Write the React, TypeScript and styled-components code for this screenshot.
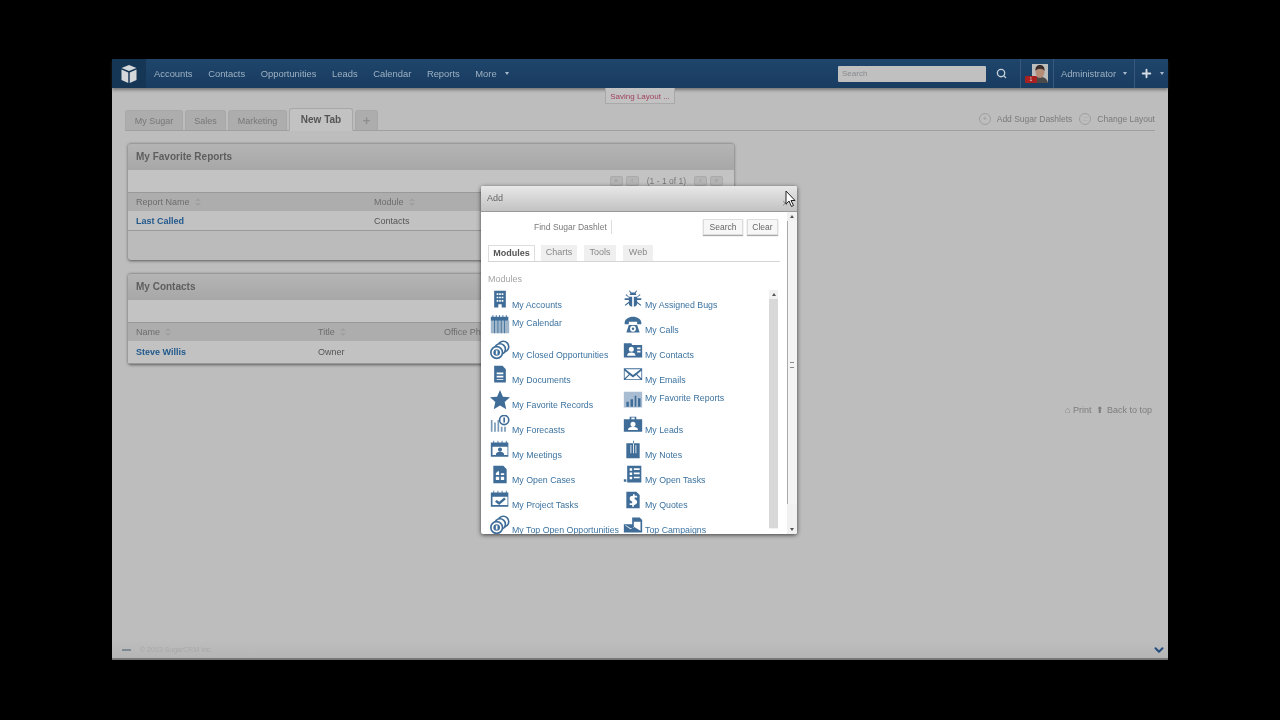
import React from "react";
import styled, { createGlobalStyle } from "styled-components";
import { Search, Plus, ChevronDown } from "lucide-react";

const GlobalStyle = createGlobalStyle`
  html, body {
    margin: 0;
    height: 100%;
    background: #000;
    font-family: "Liberation Sans", Arial, sans-serif;
  }
  #root { height: 100%; }
`;

const Screen = styled.div`
  width: 1280px;
  height: 720px;
  padding: 59px 112px 60px;
  box-sizing: border-box;
  overflow: hidden;
  background: #000;
`;

const Page = styled.div`
  position: relative;
  height: 601px;
  display: flex;
  flex-direction: column;
  background: #bdbdbd;
  filter: blur(0.5px);
`;

const Nav = styled.div`
  height: 29px;
  flex: none;
  display: flex;
  align-items: center;
  color: #9db1c3;
  font-size: 9.4px;
  background: linear-gradient(#1f456b, #193c61);
  box-shadow: 0 2px 3px rgba(60, 60, 60, 0.55);
`;

const Logo = styled.div`
  width: 34px;
  height: 29px;
  display: flex;
  align-items: center;
  justify-content: center;
  background: #163656;
`;

const NavLinks = styled.div`
  display: flex;
  gap: 15.6px;
  margin-left: 8px;
`;

const NavLink = styled.span`
  display: flex;
  align-items: center;
  gap: 8px;
`;

const Caret = styled.i`
  width: 0;
  height: 0;
  border-left: 2.5px solid transparent;
  border-right: 2.5px solid transparent;
  border-top: 3px solid #a9bccd;
`;

const NavRight = styled.div`
  margin-left: auto;
  height: 100%;
  display: flex;
  align-items: center;
`;

const SearchBox = styled.div`
  width: 148px;
  height: 16px;
  padding-left: 4px;
  box-sizing: border-box;
  font-size: 8px;
  line-height: 16px;
  color: #85898c;
  background: #c0c0c0;
  border-radius: 1px;
`;

const SearchButton = styled.div`
  width: 34px;
  padding-right: 4px;
  box-sizing: border-box;
  display: flex;
  justify-content: center;
  color: #c5cfd8;
`;

const NavCell = styled.div`
  height: 100%;
  display: flex;
  align-items: center;
  border-left: 1px solid #38597b;
  box-sizing: border-box;
  width: ${(p: { $w: number }) => p.$w}px;
  justify-content: center;
  gap: 7px;
  position: relative;
`;

const Avatar = styled.svg`
  margin-left: 6px;
`;

const Badge = styled.span`
  position: absolute;
  left: 4px;
  bottom: 5px;
  width: 12px;
  height: 7px;
  background: #a82020;
  color: #ddd;
  font-size: 5px;
  line-height: 7px;
  text-align: center;
  border-radius: 1px;
`;

const Saving = styled.div`
  position: absolute;
  left: 493px;
  top: 29px;
  width: 70px;
  height: 16px;
  background: #c2c2c2;
  border: 1px solid #a9a9a9;
  border-top: none;
  box-sizing: border-box;
  text-align: center;
  font-size: 8px;
  line-height: 17px;
  color: #a0405c;
`;

const TabStrip = styled.div`
  margin: 19px 13px 0 13px;
  height: 23px;
  flex: none;
  display: flex;
  align-items: flex-end;
  gap: 2px;
  border-bottom: 1px solid #a0a0a0;
  position: relative;
`;

const Tab = styled.div<{ $active?: boolean; $w: number; $glyph?: boolean }>`
  width: ${(p) => p.$w}px;
  height: ${(p) => (p.$active ? 23 : 20)}px;
  box-sizing: border-box;
  text-align: center;
  line-height: ${(p) => (p.$active ? 21 : 20)}px;
  font-size: ${(p) => (p.$glyph ? 13 : p.$active ? 10 : 9)}px;
  font-weight: ${(p) => (p.$active || p.$glyph ? 700 : 400)};
  color: ${(p) => (p.$active ? "#555" : p.$glyph ? "#8e8e8e" : "#777")};
  background: ${(p) => (p.$active ? "#c2c2c2" : "#adadad")};
  border: 1px solid #a8a8a8;
  border-bottom: ${(p) => (p.$active ? "1px solid #c2c2c2" : "none")};
  margin-bottom: ${(p) => (p.$active ? -1 : 0)}px;
  border-radius: 3px 3px 0 0;
`;

const TabActions = styled.div`
  margin-left: auto;
  align-self: center;
  display: flex;
  align-items: center;
  font-size: 8.5px;
  color: #7a7a7a;
  gap: 6px;
`;

const Ring = styled.span`
  width: 12px;
  height: 12px;
  box-sizing: border-box;
  margin-left: 1px;
  border: 1px solid #9f9f9f;
  border-radius: 50%;
  font-size: 8px;
  line-height: 10px;
  text-align: center;
  color: #999;
`;

const Main = styled.div`
  flex: 1;
  display: flex;
  padding: 12px 13px 0 16px;
  min-height: 0;
`;

const Column = styled.div`
  width: 606px;
  display: flex;
  flex-direction: column;
  gap: 13px;
`;

const Panel = styled.div`
  background: #bbb;
  border-radius: 3px;
  box-shadow: 0 1px 3px rgba(50, 50, 50, 0.7);
  padding-bottom: ${(p: { $pad: number }) => p.$pad}px;
`;

const PanelHead = styled.div`
  height: 26px;
  padding-left: 8px;
  font-size: 10px;
  font-weight: 700;
  line-height: 26px;
  color: #5e5e5e;
  background: linear-gradient(#b4b4b4, #a7a7a7);
  border-top: 1px solid #9a9a9a;
  border-radius: 3px 3px 0 0;
`;

const Pager = styled.div`
  height: 22px;
  background: #c3c3c3;
  display: flex;
  align-items: center;
  justify-content: flex-end;
  gap: 3px;
  padding-right: 11px;
  font-size: 8.5px;
  color: #777;
`;

const PagerButton = styled.span`
  width: 13px;
  height: 10px;
  box-sizing: border-box;
  background: #b5b5b5;
  border: 1px solid #aaa;
  border-radius: 2px;
  font-size: 7px;
  line-height: 8px;
  text-align: center;
  color: #999;
`;

const PagerText = styled.span`
  margin: 0 5px;
`;

const Row = styled.div<{ $cols: string; $head?: boolean; $h?: number }>`
  display: grid;
  grid-template-columns: ${(p) => p.$cols};
  align-items: center;
  height: ${(p) => p.$h ?? (p.$head ? 19 : 20)}px;
  padding-left: 8px;
  font-size: 9px;
  color: ${(p) => (p.$head ? "#6c6c6c" : "#555")};
  background: ${(p) => (p.$head ? "#adadad" : "#c2c2c2")};
  border-top: ${(p) => (p.$head ? "1px solid #999" : "none")};
  border-bottom: ${(p) => (p.$head ? "none" : "1px solid #999")};
  box-sizing: border-box;
  white-space: nowrap;
`;

const HeadCell = styled.span`
  display: flex;
  align-items: center;
  gap: 5px;
`;

const RecordLink = styled.a`
  font-size: 9px;
  font-weight: 700;
  color: #22598c;
`;

const SideLinks = styled.div`
  flex: 1;
  padding: 262px 3px 0 0;
  display: flex;
  justify-content: flex-end;
  gap: 5px;
  font-size: 9px;
  color: #7d7d7d;
`;

const Footer = styled.div`
  height: 17px;
  flex: none;
  display: flex;
  align-items: center;
  padding: 0 2px 0 10px;
  gap: 9px;
  font-size: 7px;
  color: #a8a8a8;
  background: linear-gradient(#bdbdbd, #b5b5b5);
  border-bottom: 2px solid #777;
`;

const FooterMark = styled.i`
  width: 9px;
  height: 2px;
  background: #7c8a92;
`;

const FooterToggle = styled.div`
  margin-left: auto;
  color: #264f80;
  display: flex;
`;

const Modal = styled.div`
  position: absolute;
  left: 369px;
  top: 127px;
  width: 316px;
  height: 348px;
  display: flex;
  flex-direction: column;
  overflow: hidden;
  background: #fff;
  border-radius: 2px;
  box-shadow: 0 1px 4px rgba(30, 30, 30, 0.8);
`;

const ModalTitle = styled.div`
  height: 26px;
  flex: none;
  box-sizing: border-box;
  padding-left: 6px;
  line-height: 25px;
  font-size: 9px;
  color: #666;
  background: linear-gradient(#e8e8e8, #c2c2c2);
  border-bottom: 1px solid #9a9a9a;
`;

const CloseMark = styled.span`
  position: absolute;
  right: 9px;
  top: 5px;
  font-size: 10px;
  color: #888;
`;

const ModalBody = styled.div`
  flex: 1;
  display: flex;
  min-height: 0;
`;

const ModalContent = styled.div`
  width: 306px;
  padding: 7px 0 0 7px;
  box-sizing: border-box;
  min-width: 0;
`;

const SearchRow = styled.div`
  height: 16px;
  display: flex;
  align-items: center;
  padding-right: 9px;
  gap: 4px;
  font-size: 8.5px;
  color: #7a7a7a;
`;

const SearchLabel = styled.span`
  margin-left: 46px;
  padding-right: 4px;
  margin-right: auto;
  border-right: 1px solid #ddd;
  line-height: 14px;
`;

const SmallButton = styled.span`
  width: ${(p: { $w: number }) => p.$w}px;
  height: 16px;
  box-sizing: border-box;
  line-height: 14px;
  text-align: center;
  font-size: 8.5px;
  color: #666;
  background: #f7f7f7;
  border: 1px solid #ddd;
  box-shadow: 0 1px 1px #aaa;
`;

const ModalTabs = styled.div`
  margin: 10px 7px 0 0;
  height: 16px;
  display: flex;
  gap: 6px;
  border-bottom: 1px solid #d5d5d5;
`;

const ModalTab = styled.span<{ $active?: boolean; $w: number }>`
  width: ${(p) => p.$w}px;
  height: 16px;
  box-sizing: border-box;
  text-align: center;
  line-height: 15px;
  font-size: 9px;
  font-weight: ${(p) => (p.$active ? 700 : 400)};
  color: ${(p) => (p.$active ? "#555" : "#888")};
  background: ${(p) => (p.$active ? "#fff" : "#efefef")};
  border: ${(p) => (p.$active ? "1px solid #ddd" : "none")};
  border-bottom: none;
  margin-right: ${(p) => (p.$active ? 0 : 1)}px;
`;

const SectionTitle = styled.div`
  margin-top: 12px;
  font-size: 9px;
  line-height: 11px;
  color: #a3a3a3;
`;

const ListWrap = styled.div`
  position: relative;
  margin-top: 5px;
  padding-left: 2px;
  height: 246px;
`;

const DashletGrid = styled.div`
  display: grid;
  grid-template-columns: 133px 145px;
  grid-auto-rows: 25px;
  white-space: nowrap;
`;

const Dashlet = styled.div`
  display: flex;
  align-items: flex-end;
  height: 20px;
`;

const DashletIcon = styled.span`
  width: 22px;
  height: 20px;
  flex: none;
  color: #3f6d98;
`;

const DashletName = styled.span<{ $top?: boolean }>`
  align-self: ${(p) => (p.$top ? "flex-start" : "flex-end")};
  margin-top: ${(p) => (p.$top ? 3 : 0)}px;
  font-size: 8.8px;
  line-height: 10px;
  color: #3b729f;
`;

const Rail = styled.div<{ $inner?: boolean }>`
  position: ${(p) => (p.$inner ? "absolute" : "static")};
  right: ${(p) => (p.$inner ? "9px" : "auto")};
  top: 0;
  width: ${(p) => (p.$inner ? 9 : 10)}px;
  height: ${(p) => (p.$inner ? "239px" : "100%")};
  display: flex;
  flex-direction: column;
  align-items: center;
  background: #f1f1f1;
  box-sizing: border-box;
`;

const RailThumb = styled.div<{ $inner?: boolean }>`
  flex: 1;
  width: 100%;
  margin: ${(p) => (p.$inner ? "9px 0 1px" : "9px 0 30px")};
  background: ${(p) => (p.$inner ? "#d8d8d8" : "#f4f4f4")};
  border-left: ${(p) => (p.$inner ? "none" : "1px solid #aaa")};
  box-sizing: border-box;
`;

const Arrow = styled.i<{ $down?: boolean }>`
  position: absolute;
  ${(p) => (p.$down ? "bottom: 3px;" : "top: 3px;")}
  width: 0;
  height: 0;
  border-left: 2px solid transparent;
  border-right: 2px solid transparent;
  ${(p) => (p.$down ? "border-top" : "border-bottom")}: 3px solid #555;
`;

const OuterRailWrap = styled.div`
  position: relative;
  width: 10px;
  display: flex;
  justify-content: center;
`;

const Grip = styled.i`
  position: absolute;
  left: 3px;
  top: ${(p: { $top: number }) => p.$top}px;
  width: 4px;
  height: 4px;
  border-top: 1px solid #888;
  border-bottom: 1px solid #888;
`;

const Pointer = styled.svg`
  position: absolute;
  left: 673px;
  top: 131px;
`;

const SortIcon = () => (
  <svg width="6" height="8" viewBox="0 0 6 8" fill="#a0a0a0">
    <path d="M3 0l3 3H0zM0 5h6L3 8z" />
  </svg>
);

const coins = (
  <g fill="none" stroke="currentColor">
    <circle cx="16" cy="8" r="6.500" strokeWidth="2" />
    <circle cx="12" cy="11" r="6.500" strokeWidth="2" fill="#fff" />
    <circle cx="8" cy="15" r="7" strokeWidth="2" fill="#fff" />
    <circle cx="8" cy="15" r="4" fill="currentColor" stroke="none" />
    <rect x="7" y="12.500" width="2" height="5" fill="#fff" stroke="none" />
  </g>
);

const icons: Record<string, React.ReactNode> = {
  building: <path d="M5 1h14v20H5zM8 4v2h2V4zm3 0v2h2V4zm3 0v2h2V4zM8 8v2h2V8zm3 0v2h2V8zm3 0v2h2V8zM8 12v2h2v-2zm3 0v2h2v-2zm3 0v2h2v-2zM10 17v4h4v-4z" fillRule="evenodd" />,
  bug: <path d="M9 4l-2-3 1-.5L10 3h4l2-2.500 1 .5-2 3c1 1 1 2 1 2H8s0-1 1-2zM7 8h4v12c-3 0-4-2-4-4l-4 3-1-1 5-4v-2H2v-2h5V9L3 6l1-1zm6 0h4l3-3 1 1-4 3v1h5v2h-5v2l5 4-1 1-4-3c0 2-1 4-4 4z" />,
  calendar: (
    <>
      <path d="M1 7h22v15H1z" opacity=".5" />
      <path d="M1 2h2V0h1v2h3V0h1v2h3V0h1v2h3V0h1v2h3V0h1v2h2v5H1zM5 7h1v15H5zm4 0h1v15H9zm4 0h1v15h-1zm4 0h1v15h-1z" />
    </>
  ),
  phone: <path d="M2 9c0-4 5-7 10-7s10 3 10 7v2h-5V8H7v3H2zM7 12h10l3 9H4zm5 1a3.500 3.500 0 100 7 3.500 3.500 0 000-7zm0 2a1.500 1.500 0 110 3 1.500 1.500 0 010-3z" fillRule="evenodd" />,
  coins,
  contacts: <path d="M1 4h9l1 2h12v15H1zm9 4a3 3 0 100 6 3 3 0 000-6zM5 19c0-3 2-4 5-4s5 1 5 4zM17 9v2h4V9zm0 4v2h4v-2z" fillRule="evenodd" />,
  doc: <path d="M5 1h10l4 4v16H5zM8 9v2h8V9zm0 4v2h8v-2zM8 17v1h8v-1z" fillRule="evenodd" />,
  mail: <path d="M1 4h22v14H1zm2 1l9 7 9-7zm-1 2v9l5-5zm20 0l-5 4 5 5zM8 12l-5 5h18l-5-5-4 3z" fillRule="evenodd" />,
  star: <path d="M12 0l3.500 8 8.500.8-6.400 5.700 1.900 8.500L12 18.500 4.500 23l1.900-8.500L0 8.800 8.500 8z" />,
  report: (
    <>
      <path d="M1 2h22v19H1z" opacity=".45" />
      <path d="M4 14h3v6H4zm5-3h3v9H9zm5-4h2v13h-2zm4 3h3v10h-3z" />
    </>
  ),
  forecast: (
    <>
      <path d="M1 6h2v14H1zm4 3h2v11H5zm4-3h2v14H9zm4 8h2v6h-2zm4 0h2v6h-2z" opacity=".7" />
      <circle cx="17" cy="6" r="5.500" fill="none" stroke="currentColor" strokeWidth="2" />
      <rect x="16" y="3" width="2" height="6" />
    </>
  ),
  leads: <path d="M8 5V2h8v3h7v15H1V5zm2 0h4V3h-4zm2 3a3 3 0 100 6 3 3 0 000-6zM6 18c0-3 3-4 6-4s6 1 6 4z" fillRule="evenodd" />,
  meeting: <path d="M1 3h3V1h1v2h4V1h1v2h4V1h1v2h4V1h1v2h2v17H1zm2 5v10h18V8zm9 1a2.500 2.500 0 110 5 2.500 2.500 0 010-5zM7 18c0-3 2-4 5-4s5 1 5 4z" fillRule="evenodd" />,
  notes: <path d="M4 4h16v18H4zM9 6v10h1V6zm3-5v15h1V1zm3 5v10h1V6z" fillRule="evenodd" />,
  cases: <path d="M4 1h12l4 4v17H4zm6 6l-3 3v2h4V9zm3 3v2h4v-2zm-6 4v4h4v-4zm6 0v4h4v-4z" fillRule="evenodd" />,
  tasks: <path d="M5 1h17v20H5zM8 4v3h3V4zm5 0v2h7V4zM8 9v3h3V9zm5 0v2h7V9zM8 14v3h3v-3zm5 0v2h7v-2zM1 17h3v3H1z" fillRule="evenodd" />,
  project: <path d="M1 3h3V1h1v2h4V1h1v2h4V1h1v2h4V1h1v2h2v17H1zm2 5v10h18V8zm14 1l2 2-8 7-5-4 2-2 3 2z" fillRule="evenodd" />,
  quotes: <path d="M4 2h12l4 4v16H4zm8 3v2c-3 0-4 1.500-4 3.500s2 3 3 3.300v2.200H8v2h3v2h2v-2c2 0 4-1.500 4-3.500s-2-3-3-3.300V9h3V7h-3V5z" fillRule="evenodd" />,
  campaign: <path d="M11 8V3h9l3 3v15H1V11h10zm-8 5l6 4 4-3 8 5V8H13v7l-4 1-6-4z" fillRule="evenodd" />,
};

const DashIcon = ({ name }: { name: string }) => (
  <svg width="20" height="20" viewBox="0 0 24 24" fill="currentColor">
    {icons[name]}
  </svg>
);

const dashlets = [
  { label: "My Accounts", icon: "building" },
  { label: "My Assigned Bugs", icon: "bug" },
  { label: "My Calendar", icon: "calendar", top: true },
  { label: "My Calls", icon: "phone" },
  { label: "My Closed Opportunities", icon: "coins" },
  { label: "My Contacts", icon: "contacts" },
  { label: "My Documents", icon: "doc" },
  { label: "My Emails", icon: "mail" },
  { label: "My Favorite Records", icon: "star" },
  { label: "My Favorite Reports", icon: "report", top: true },
  { label: "My Forecasts", icon: "forecast" },
  { label: "My Leads", icon: "leads" },
  { label: "My Meetings", icon: "meeting" },
  { label: "My Notes", icon: "notes" },
  { label: "My Open Cases", icon: "cases" },
  { label: "My Open Tasks", icon: "tasks" },
  { label: "My Project Tasks", icon: "project" },
  { label: "My Quotes", icon: "quotes" },
  { label: "My Top Open Opportunities", icon: "coins" },
  { label: "Top Campaigns", icon: "campaign" },
];

const navItems = ["Accounts", "Contacts", "Opportunities", "Leads", "Calendar", "Reports"];

export default function App() {
  return (
    <Screen>
      <GlobalStyle />
      <Page>
        <Nav>
          <Logo>
            <svg width="18" height="18" viewBox="0 0 24 24" fill="#d5d8da">
              <path d="M12 0l10 4-10 4L2 4zM2 6l9 4v14l-9-4zM22 6l-9 4v14l9-4z" />
            </svg>
          </Logo>
          <NavLinks>
            {navItems.map((item) => (
              <NavLink key={item}>{item}</NavLink>
            ))}
            <NavLink>
              More <Caret />
            </NavLink>
          </NavLinks>
          <NavRight>
            <SearchBox>Search</SearchBox>
            <SearchButton>
              <Search size={11} strokeWidth={3} />
            </SearchButton>
            <NavCell $w={33}>
              <Avatar width="16" height="19" viewBox="0 0 16 19">
                <rect width="16" height="19" fill="#bdbdbd" />
                <path d="M0 19c1-5 4-6 8-6s7 1 8 6z" fill="#4a4a4a" />
                <ellipse cx="8" cy="8" rx="4.500" ry="6" fill="#b58d78" />
                <path d="M3.500 7C3 2 6 1 8 1s5 1 4.500 6C11 4 5 4 3.500 7z" fill="#3a2c28" />
              </Avatar>
              <Badge>1</Badge>
            </NavCell>
            <NavCell $w={81}>
              Administrator <Caret />
            </NavCell>
            <NavCell $w={34}>
              <Plus size={13} strokeWidth={3.5} color="#d5dde4" />
              <Caret />
            </NavCell>
          </NavRight>
        </Nav>
        <Saving>Saving Layout ...</Saving>
        <TabStrip>
          <Tab $w={58}>My Sugar</Tab>
          <Tab $w={41}>Sales</Tab>
          <Tab $w={59}>Marketing</Tab>
          <Tab $w={64} $active>
            New Tab
          </Tab>
          <Tab $w={23} $glyph>
            +
          </Tab>
          <TabActions>
            <Ring>+</Ring>
            Add Sugar Dashlets
            <Ring>::</Ring>
            Change Layout
          </TabActions>
        </TabStrip>
        <Main>
          <Column>
            <Panel $pad={29}>
              <PanelHead>My Favorite Reports</PanelHead>
              <Pager>
                <PagerButton>«</PagerButton>
                <PagerButton>‹</PagerButton>
                <PagerText>(1 - 1 of 1)</PagerText>
                <PagerButton>›</PagerButton>
                <PagerButton>»</PagerButton>
              </Pager>
              <Row $cols="238px 1fr" $head>
                <HeadCell>
                  Report Name <SortIcon />
                </HeadCell>
                <HeadCell>
                  Module <SortIcon />
                </HeadCell>
              </Row>
              <Row $cols="238px 1fr">
                <RecordLink>Last Called</RecordLink>
                <span>Contacts</span>
              </Row>
            </Panel>
            <Panel $pad={0}>
              <PanelHead>My Contacts</PanelHead>
              <Pager />
              <Row $cols="182px 126px 1fr" $head>
                <HeadCell>
                  Name <SortIcon />
                </HeadCell>
                <HeadCell>
                  Title <SortIcon />
                </HeadCell>
                <span>Office Phone</span>
              </Row>
              <Row $cols="182px 126px 1fr" $h={23}>
                <RecordLink>Steve Willis</RecordLink>
                <span>Owner</span>
              </Row>
            </Panel>
          </Column>
          <SideLinks>
            <span>⌂ Print</span>
            <span>⬆ Back to top</span>
          </SideLinks>
        </Main>
        <Footer>
          <FooterMark />
          © 2013 SugarCRM Inc.
          <FooterToggle>
            <ChevronDown size={14} strokeWidth={3.5} />
          </FooterToggle>
        </Footer>
        <Modal>
          <ModalTitle>
            Add
            <CloseMark>×</CloseMark>
          </ModalTitle>
          <ModalBody>
            <ModalContent>
              <SearchRow>
                <SearchLabel>Find Sugar Dashlet</SearchLabel>
                <SmallButton $w={40}>Search</SmallButton>
                <SmallButton $w={31}>Clear</SmallButton>
              </SearchRow>
              <ModalTabs>
                <ModalTab $w={47} $active>
                  Modules
                </ModalTab>
                <ModalTab $w={36}>Charts</ModalTab>
                <ModalTab $w={32}>Tools</ModalTab>
                <ModalTab $w={30}>Web</ModalTab>
              </ModalTabs>
              <SectionTitle>Modules</SectionTitle>
              <ListWrap>
                <DashletGrid>
                  {dashlets.map((d) => (
                    <Dashlet key={d.label}>
                      <DashletIcon>
                        <DashIcon name={d.icon} />
                      </DashletIcon>
                      <DashletName $top={d.top}>{d.label}</DashletName>
                    </Dashlet>
                  ))}
                </DashletGrid>
                <Rail $inner>
                  <Arrow />
                  <RailThumb $inner />
                </Rail>
              </ListWrap>
            </ModalContent>
            <OuterRailWrap>
              <Arrow />
              <Rail>
                <RailThumb />
              </Rail>
              <Grip $top={150} />
              <Arrow $down />
            </OuterRailWrap>
          </ModalBody>
        </Modal>
        <Pointer width="12" height="18" viewBox="0 0 12 18">
          <path d="M1 1v13l3-3 2.500 5.500 2-1L6 10.500h4z" fill="#fff" stroke="#222" strokeWidth="1" />
        </Pointer>
      </Page>
    </Screen>
  );
}
